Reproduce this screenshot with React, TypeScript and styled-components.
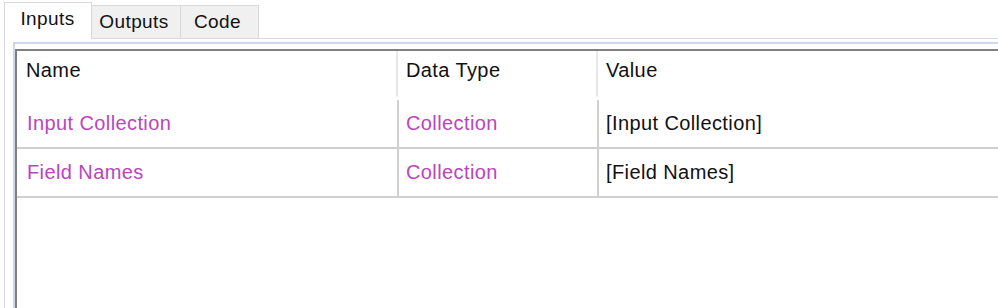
import React from 'react';
import styled, { createGlobalStyle } from 'styled-components';

interface IParam {
  name: string;
  dataType: string;
  value: string;
}

const params: IParam[] = [
  { name: 'Input Collection', dataType: 'Collection', value: '[Input Collection]' },
  { name: 'Field Names', dataType: 'Collection', value: '[Field Names]' },
];

const tabs = [
  { label: 'Inputs', width: 88 },
  { label: 'Outputs', width: 89 },
  { label: 'Code', width: 78 },
];

const App: React.FC = () => {
  return (
    <Window>
      <GlobalStyle />
      <TabStrip>
        {tabs.map((t, i) => (
          <Tab key={t.label} $active={i === 0} $width={t.width}>
            {t.label}
          </Tab>
        ))}
      </TabStrip>
      <TabPanel>
        <Frame>
          <Grid>
            <Table>
              <HeaderCell>Name</HeaderCell>
              <HeaderCell>Data Type</HeaderCell>
              <HeaderCell>Value</HeaderCell>
              {params.map((p) => (
                <React.Fragment key={p.name}>
                  <Cell $color="#bb44c0">{p.name}</Cell>
                  <Cell $color="#bb44c0">{p.dataType}</Cell>
                  <Cell>{p.value}</Cell>
                </React.Fragment>
              ))}
            </Table>
          </Grid>
        </Frame>
      </TabPanel>
    </Window>
  );
};

export default App;

const GlobalStyle = createGlobalStyle`
  html, body {
    margin: 0;
    padding: 0;
    background: #fff;
    overflow: hidden;
  }
  body {
    font-family: 'Liberation Sans', Arial, sans-serif;
  }
`;

const Window = styled.div`
  display: flex;
  flex-direction: column;
  width: 1010px;
  height: 320px;
`;

const TabStrip = styled.div`
  display: flex;
  align-items: flex-end;
  height: 38px;
  padding-left: 4px;
  box-sizing: border-box;
`;

const Tab = styled.div<{ $active?: boolean; $width: number }>`
  position: relative;
  z-index: ${(p) => (p.$active ? 2 : 1)};
  box-sizing: border-box;
  width: ${(p) => p.$width}px;
  height: ${(p) => (p.$active ? 37 : 33)}px;
  margin-bottom: ${(p) => (p.$active ? -1 : 0)}px;
  display: flex;
  align-items: center;
  justify-content: center;
  padding: ${(p) => (p.$active ? '0 1px 5px 0' : '0 4px 0 0')};
  background: ${(p) => (p.$active ? '#fff' : '#f0f0f0')};
  border: 1px solid #d9d9d9;
  border-bottom: none;
  border-left: ${(p) => (p.$active ? '1px solid #d9d9d9' : 'none')};
  font-size: 19px;
  letter-spacing: 0.4px;
  color: #111;
`;

const TabPanel = styled.div`
  flex: 1;
  display: flex;
  flex-direction: column;
  margin-left: 4px;
  padding: 3px 0 0 8px;
  border-top: 1px solid #d9d9d9;
  border-left: 1px solid #d9d9d9;
`;

const Frame = styled.div`
  flex: 1;
  display: flex;
  flex-direction: column;
  padding-top: 5px;
  border-top: 2px solid #cad9ee;
  border-left: 2px solid #cad9ee;
`;

const Grid = styled.div`
  flex: 1;
  background: #fff;
  border-top: 2px solid #808080;
  border-left: 2px solid #808080;
`;

const Table = styled.div`
  display: grid;
  grid-template-columns: 382px 200px 1fr;
  font-size: 20px;
  letter-spacing: 0.4px;
`;

const HeaderCell = styled.div`
  box-sizing: border-box;
  height: 46px;
  margin: 0 1px 3px 0;
  display: flex;
  align-items: center;
  padding: 0 0 7px 7px;
  border-right: 2px solid #e9e9e9;
  color: #111;
  white-space: nowrap;
  &:first-child {
    padding-left: 9px;
  }
  &:nth-child(3) {
    border-right: none;
  }
`;

const Cell = styled.div<{ $color?: string }>`
  box-sizing: border-box;
  height: 49px;
  display: flex;
  align-items: center;
  padding: 0 0 1px 7px;
  border-bottom: 2px solid #d0d0d0;
  border-right: 2px solid #d0d0d0;
  color: ${(p) => p.$color || '#111'};
  white-space: nowrap;
  &:nth-child(3n + 1) {
    padding-left: 10px;
  }
  &:nth-child(3n) {
    border-right: none;
  }
`;
